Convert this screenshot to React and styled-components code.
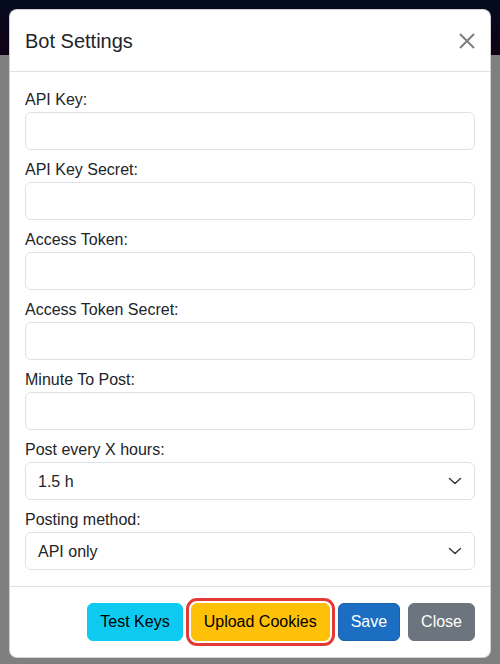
import React from 'react';
import styled, { createGlobalStyle } from 'styled-components';

const GlobalStyle = createGlobalStyle`
  * {
    box-sizing: border-box;
  }

  body {
    margin: 0;
    font-family: "Liberation Sans", Arial, sans-serif;
    color: #212529;
  }
`;

const Screen = styled.div`
  min-height: 664px;
  padding: 9px 9px 0;
  background: linear-gradient(
    to bottom,
    #030b1f 0,
    #130016 55px,
    #7f7f7f 55px,
    #7f7f7f 100%
  );
`;

const Dialog = styled.div`
  width: 482px;
  background: #fff;
  border: 1px solid rgba(0, 0, 0, 0.175);
  border-radius: 8px;
  overflow: hidden;
`;

const Header = styled.div`
  display: flex;
  align-items: center;
  justify-content: space-between;
  padding: 16px 15px 15px;
  border-bottom: 1px solid #dee2e6;
`;

const Title = styled.h5`
  margin: 0;
  font-size: 20px;
  font-weight: 400;
  line-height: 30px;
`;

const CloseX = styled.button`
  display: flex;
  align-items: center;
  justify-content: center;
  width: 24px;
  height: 24px;
  margin-right: -4px;
  padding: 0;
  border: 0;
  background: transparent;
  opacity: 0.5;
  cursor: pointer;
`;

const Body = styled.div`
  display: flex;
  flex-direction: column;
  gap: 8px;
  padding: 16px 15px;
`;

const Field = styled.div`
  display: flex;
  flex-direction: column;
`;

const Label = styled.label`
  font-size: 16px;
  line-height: 24px;
`;

const Input = styled.input`
  display: block;
  width: 100%;
  height: 38px;
  padding: 6px 12px;
  font-family: inherit;
  font-size: 16px;
  color: #212529;
  background: #fff;
  border: 1px solid #dee2e6;
  border-radius: 6px;
  outline: none;
`;

const SelectWrap = styled.div`
  position: relative;
`;

const Select = styled.select`
  display: block;
  width: 100%;
  height: 38px;
  padding: 6px 36px 6px 12px;
  font-family: inherit;
  font-size: 16px;
  color: #212529;
  background: #fff;
  border: 1px solid #dee2e6;
  border-radius: 6px;
  appearance: none;
  outline: none;
`;

const Chevron = styled.svg`
  position: absolute;
  right: 12px;
  top: 13px;
  pointer-events: none;
`;

const Footer = styled.div`
  display: flex;
  justify-content: flex-end;
  gap: 8px;
  padding: 16px 15px;
  border-top: 1px solid #dee2e6;
`;

const tones = {
  info: { bg: '#0dcaf0', border: '#0dcaf0', color: '#000' },
  warning: { bg: '#ffc107', border: '#ffc107', color: '#000' },
  primary: { bg: '#1b6ec2', border: '#1861ac', color: '#fff' },
  secondary: { bg: '#6c757d', border: '#6c757d', color: '#fff' },
};

const Button = styled.button`
  height: 38px;
  padding: 6px 12px;
  font-family: inherit;
  font-size: 16px;
  line-height: 24px;
  border-radius: 6px;
  border: 1px solid ${({ $tone }) => tones[$tone].border};
  background: ${({ $tone }) => tones[$tone].bg};
  color: ${({ $tone }) => tones[$tone].color};
  outline: ${({ $marked }) => ($marked ? '3px solid #e53935' : 'none')};
  outline-offset: 2px;
  cursor: pointer;
`;

const fields = [
  { label: 'API Key:' },
  { label: 'API Key Secret:' },
  { label: 'Access Token:' },
  { label: 'Access Token Secret:' },
  { label: 'Minute To Post:' },
  { label: 'Post every X hours:', options: ['1.5 h', '1 h', '2 h', '3 h'] },
  { label: 'Posting method:', options: ['API only', 'Cookies only', 'API + Cookies'] },
];

const App = () => (
  <>
    <GlobalStyle />
    <Screen>
      <Dialog>
        <Header>
          <Title>Bot Settings</Title>
          <CloseX aria-label="Close">
            <svg width="16" height="16" viewBox="0 0 16 16">
              <path d="M1 1L15 15M15 1L1 15" stroke="#000" strokeWidth="2" />
            </svg>
          </CloseX>
        </Header>
        <Body>
          {fields.map((field) => (
            <Field key={field.label}>
              <Label>{field.label}</Label>
              {field.options ? (
                <SelectWrap>
                  <Select defaultValue={field.options[0]}>
                    {field.options.map((opt) => (
                      <option key={opt}>{opt}</option>
                    ))}
                  </Select>
                  <Chevron width="16" height="12" viewBox="0 0 16 12">
                    <path
                      d="M2.5 3.5l5.5 5 5.5-5"
                      fill="none"
                      stroke="#343a40"
                      strokeWidth="1.5"
                      strokeLinecap="round"
                      strokeLinejoin="round"
                    />
                  </Chevron>
                </SelectWrap>
              ) : (
                <Input type="text" />
              )}
            </Field>
          ))}
        </Body>
        <Footer>
          <Button $tone="info">Test Keys</Button>
          <Button $tone="warning" $marked>Upload Cookies</Button>
          <Button $tone="primary">Save</Button>
          <Button $tone="secondary">Close</Button>
        </Footer>
      </Dialog>
    </Screen>
  </>
);

export default App;
